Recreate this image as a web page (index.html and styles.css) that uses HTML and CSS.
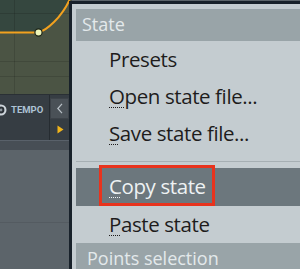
FILE: index.html
```html
<!DOCTYPE html>
<html>
<head>
<meta charset="utf-8">
<link rel="stylesheet" href="styles.css">
</head>
<body>
<div class="app">
  <div class="graph">
    <svg class="graph-svg" width="72" height="94" viewBox="0 0 72 94">
      <rect width="72" height="94" fill="#4b5444"/>
      <path d="M0 0 H69.5 C61 18 47 30 38.5 32.5 H0 Z" fill="#35473f"/>
      <path d="M0 13.5 H72 M0 61.5 H72 M0 76.5 H72 M14.5 0 V94" stroke="rgba(0,0,0,0.13)" stroke-width="1" fill="none"/>
      <path d="M0 32.5 H38.5 C47 30 61 18 69.5 0" stroke="#f2a11f" stroke-width="2" fill="none"/>
      <circle cx="38.5" cy="32.5" r="3.6" fill="#eef5b8" stroke="#1e2618" stroke-width="1.2"/>
    </svg>
  </div>
  <div class="toolbar">
    <div class="tempo">
      <svg class="knob" width="12" height="12" viewBox="0 0 12 12">
        <circle cx="6" cy="6" r="5.5" fill="#cdd4da"/>
        <circle cx="6" cy="6" r="3.4" fill="#2b3137"/>
        <circle cx="6" cy="6" r="1.4" fill="#8e979e"/>
      </svg>
      <span class="tempo-label">TEMPO</span>
    </div>
    <div class="tool-col">
      <div class="back-btn">
        <svg width="8" height="11" viewBox="0 0 8 11"><path d="M6 0.8 L1.8 5.5 L6 10.2" stroke="#b9c1c7" stroke-width="1.2" fill="none"/></svg>
      </div>
      <div class="play">
        <svg width="7" height="9" viewBox="0 0 7 9"><path d="M0.5 0.5 L6.5 4.5 L0.5 8.5 Z" fill="#f2b51a"/></svg>
      </div>
    </div>
  </div>
  <div class="band"></div>
  <div class="lower">
    <div class="lower-line"></div>
  </div>
</div>

<div class="menu">
  <div class="menu-header">State</div>
  <div class="menu-item">Presets</div>
  <div class="menu-item"><span class="key">O</span>pen state file...</div>
  <div class="menu-item"><span class="key">S</span>ave state file...</div>
  <div class="menu-sep"></div>
  <div class="menu-item active"><span class="key">C</span>opy state<div class="red-box"></div></div>
  <div class="menu-item"><span class="key">P</span>aste state</div>
  <div class="menu-header second">Points selection</div>
</div>
</body>
</html>
```

FILE: styles.css
```css
* { box-sizing: border-box; }
html, body { margin: 0; padding: 0; }
body {
  width: 300px;
  height: 269px;
  overflow: hidden;
  position: relative;
  background: #5c646a;
  font-family: "Open Sans", "DejaVu Sans", sans-serif;
}

.app {
  width: 72px;
  height: 269px;
  display: flex;
  flex-direction: column;
}
.graph { height: 94px; background: #4b5444; }
.graph-svg { display: block; }

.toolbar {
  height: 46px;
  background: #363d43;
  border-top: 1px solid #2a3035;
  display: flex;
}
.tempo {
  width: 50px;
  border-right: 1px solid #262c31;
  display: flex;
  align-items: flex-start;
  padding-top: 9px;
  gap: 4px;
}
.knob { display: block; margin-left: -5px; }
.tempo-label {
  font-family: Roboto, "Liberation Sans", sans-serif;
  font-weight: bold;
  font-size: 9.5px;
  line-height: 12px;
  color: #adc2d4;
}
.tool-col {
  width: 19px;
  display: flex;
  flex-direction: column;
}
.back-btn {
  height: 21px;
  margin-top: 3px;
  background: #4a5157;
  border: 1px solid #3d4349;
  display: flex;
  align-items: center;
  justify-content: center;
}
.back-btn svg { display: block; }
.play {
  flex: 1;
  display: flex;
  align-items: center;
  justify-content: center;
  padding-left: 2px;
}
.play svg { display: block; }

.band {
  height: 10px;
  background: #474e55;
  border-top: 1px solid #59616a;
}
.lower {
  flex: 1;
  background: #5c646a;
  padding-top: 72px;
}
.lower-line { height: 1px; background: #545b61; }

.menu {
  position: absolute;
  left: 69px;
  top: 1px;
  right: 0;
  bottom: 0;
  overflow: hidden;
  background: #c4ccd0;
  border-left: 3px solid #18212a;
  border-top: 3px solid #18212a;
  padding: 5px 0 0 4px;
}
.menu-header {
  height: 32px;
  line-height: 31px;
  background: #99a4a8;
  color: #e3e9eb;
  font-size: 18px;
  padding-left: 6px;
  white-space: nowrap;
}
.menu-header.second { padding-left: 11px; }
.menu-item {
  height: 37px;
  line-height: 36px;
  padding-left: 33px;
  font-size: 20.5px;
  letter-spacing: -0.4px;
  color: #1e1c1c;
  white-space: nowrap;
}
.menu-item.active {
  height: 38px;
  line-height: 36px;
  background: #6c777d;
  color: #eef2f3;
  position: relative;
}
.key {
  text-decoration-line: underline;
  text-decoration-style: dotted;
  text-underline-offset: 3px;
  text-decoration-thickness: 1px;
}
.menu-sep {
  height: 1px;
  background: #a6afb3;
  margin: 9px 0 6px;
}
.red-box {
  position: absolute;
  left: 23px;
  top: -3px;
  width: 116px;
  height: 41px;
  border: 3px solid #e8331d;
}
```
